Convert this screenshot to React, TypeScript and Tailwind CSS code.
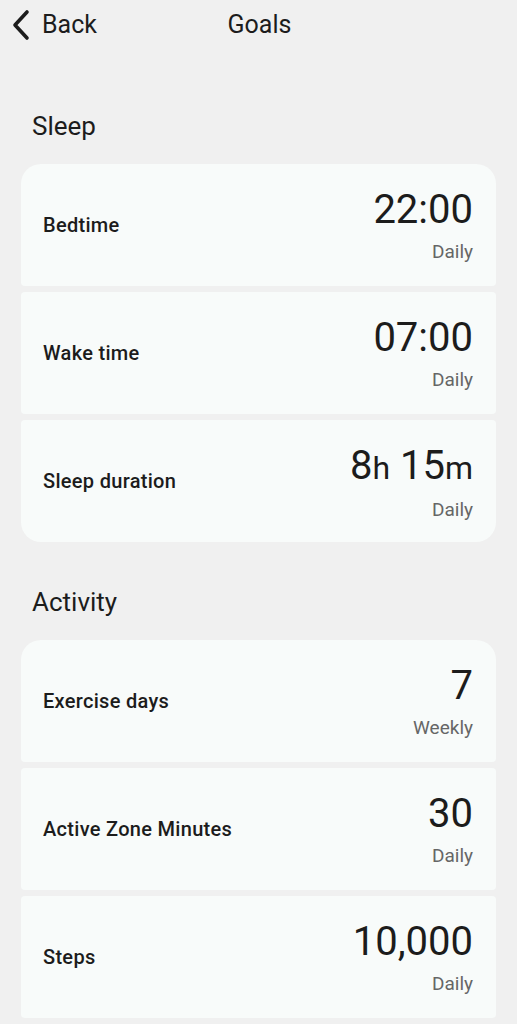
type Goal = {
  label: string;
  value: React.ReactNode;
  period: string;
};

const sleepGoals: Goal[] = [
  { label: "Bedtime", value: "22:00", period: "Daily" },
  { label: "Wake time", value: "07:00", period: "Daily" },
  {
    label: "Sleep duration",
    value: (
      <>
        8<span className="text-[32px]">h</span> 15
        <span className="text-[32px]">m</span>
      </>
    ),
    period: "Daily",
  },
];

const activityGoals: Goal[] = [
  { label: "Exercise days", value: "7", period: "Weekly" },
  { label: "Active Zone Minutes", value: "30", period: "Daily" },
  { label: "Steps", value: "10,000", period: "Daily" },
];

const GoalCard = ({
  goal,
  first,
  last,
}: {
  goal: Goal;
  first: boolean;
  last: boolean;
}) => {
  return (
    <li
      className={`flex h-[122px] shrink-0 items-start justify-between bg-[#f8fbfa] pl-[22px] pr-[23px] ${
        first ? "rounded-t-[20px]" : "rounded-t-[4px]"
      } ${last ? "rounded-b-[20px]" : "rounded-b-[4px]"}`}
    >
      <span className="self-center text-[20px] font-medium tracking-[0.3px] text-[#1c1c1c]">
        {goal.label}
      </span>
      <div className="flex flex-col items-end pt-[22px]">
        <span className="text-[40px] leading-[48px] text-[#1c1c1c]">
          {goal.value}
        </span>
        <span className="mt-[6px] text-[19px] leading-[24px] text-[#666666]">
          {goal.period}
        </span>
      </div>
    </li>
  );
};

const Section = ({
  title,
  goals,
  more,
}: {
  title: string;
  goals: Goal[];
  more?: boolean;
}) => {
  return (
    <section>
      <h2 className="pl-[32px] text-[26px] leading-[32px] text-[#1c1c1c]">
        {title}
      </h2>
      <ul className="mx-[21px] mt-[22px] flex flex-col gap-[6px]">
        {goals.map((goal, i) => (
          <GoalCard
            key={goal.label}
            goal={goal}
            first={i === 0}
            last={!more && i === goals.length - 1}
          />
        ))}
        {more && <li className="h-[122px] shrink-0 rounded-[4px] bg-[#f8fbfa]" />}
      </ul>
    </section>
  );
};

const App = () => {
  return (
    <div
      className="h-[1024px] w-[517px] overflow-hidden bg-[#f0f0f0]"
      style={{ fontFamily: "Roboto, 'Open Sans', sans-serif" }}
    >
      <header className="relative flex h-[50px] items-center">
        <button className="flex items-center pl-[10px] text-[#1c1c1c]">
          <svg
            width="22"
            height="32"
            viewBox="0 0 22 32"
            fill="none"
            stroke="currentColor"
            strokeWidth="3.6"
            strokeLinecap="round"
            strokeLinejoin="round"
          >
            <path d="M17 3 L5 16 L17 29" />
          </svg>
          <span className="ml-[10px] text-[25px]">Back</span>
        </button>
        <h1 className="absolute left-1/2 -translate-x-1/2 pl-[2px] text-[25px] text-[#1c1c1c]">
          Goals
        </h1>
      </header>
      <div className="mt-[60px]">
        <Section title="Sleep" goals={sleepGoals} />
      </div>
      <div className="mt-[44px]">
        <Section title="Activity" goals={activityGoals} more />
      </div>
    </div>
  );
};

export default App;
